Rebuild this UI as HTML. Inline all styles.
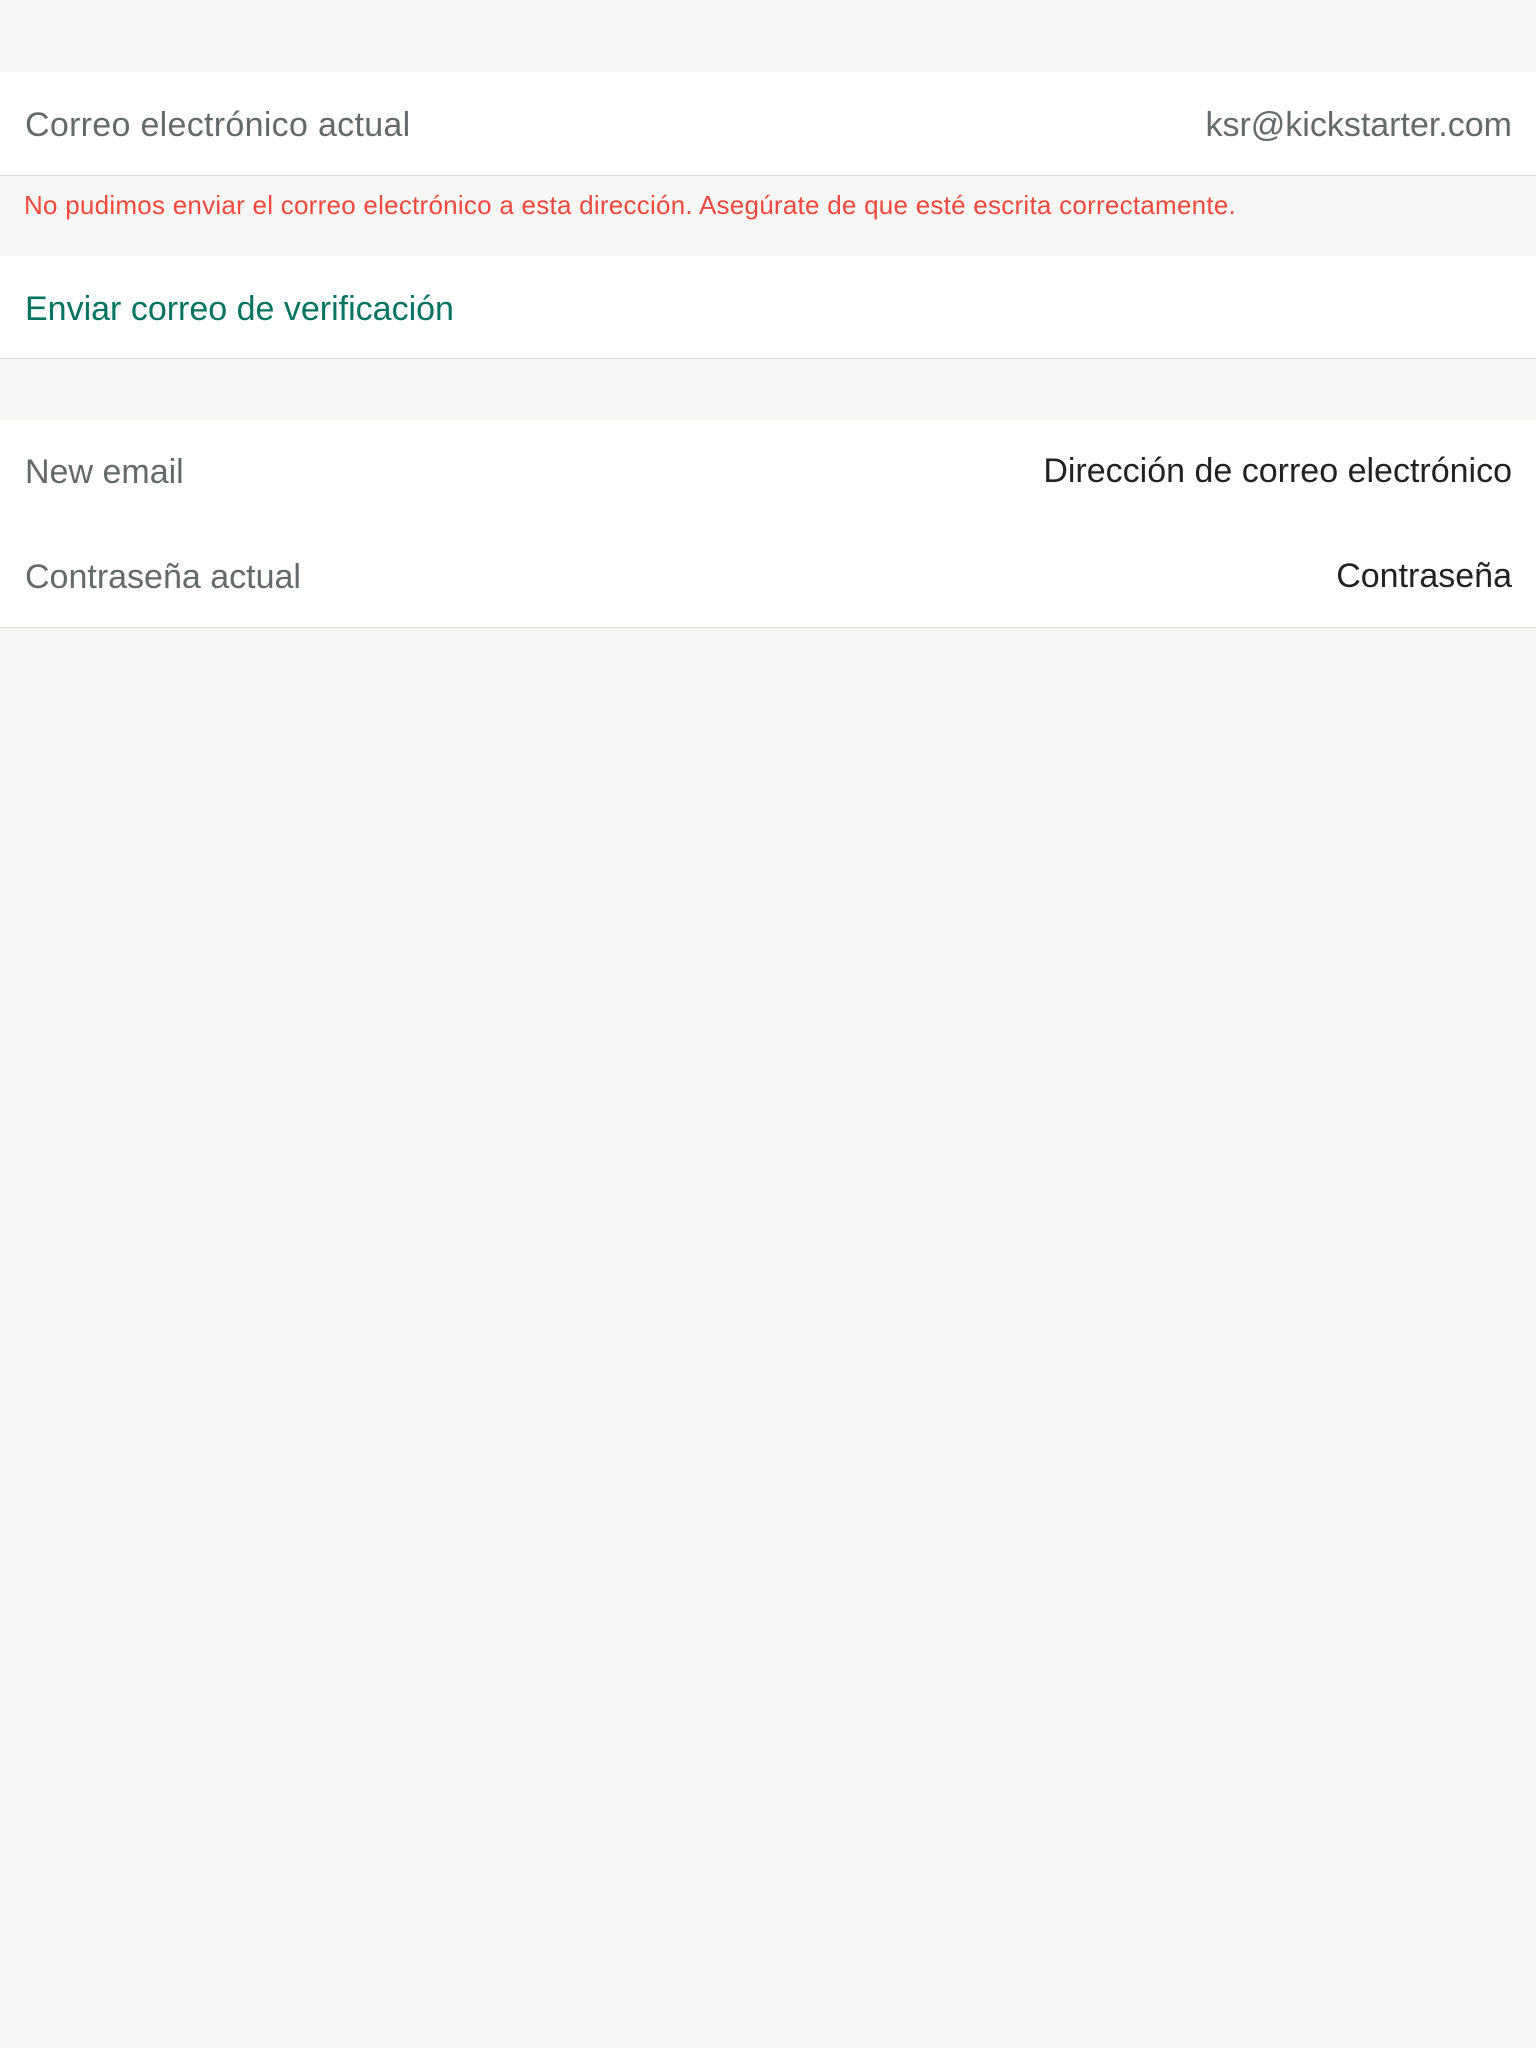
<!DOCTYPE html>
<html><head><meta charset="utf-8"><style>
body{margin:0;width:1536px;height:2048px;background:#f6f6f4;font-family:"Liberation Sans",sans-serif;position:relative;overflow:hidden}
.w{position:absolute;left:0;width:1536px;background:#fff}
.t{position:absolute;font-size:34px;line-height:40px;white-space:nowrap}
.l{left:25px;color:#656969}
.r{right:24px}
.line{position:absolute;left:0;width:1536px;height:1px;background:#dcdcdc}
</style></head><body>
<div class="w" style="top:72px;height:103px"></div>
<div class="line" style="top:175px"></div>
<div class="t l" style="top:105px;letter-spacing:0.3px">Correo electrónico actual</div>
<div class="t r" style="top:105px;color:#656969">ksr@kickstarter.com</div>
<div class="t" style="left:24px;top:190px;font-size:26px;line-height:30px;letter-spacing:0.25px;color:#f5483d">No pudimos enviar el correo electrónico a esta dirección. Asegúrate de que esté escrita correctamente.</div>
<div class="w" style="top:256px;height:102px"></div>
<div class="line" style="top:358px"></div>
<div class="t" style="left:25px;top:289px;color:#037362">Enviar correo de verificación</div>
<div class="w" style="top:420px;height:207px"></div>
<div class="line" style="top:627px"></div>
<div class="t l" style="top:452px">New email</div>
<div class="t r" style="top:451px;color:#222">Dirección de correo electrónico</div>
<div class="t l" style="top:557px">Contraseña actual</div>
<div class="t r" style="top:556px;color:#222">Contraseña</div>
</body></html>
